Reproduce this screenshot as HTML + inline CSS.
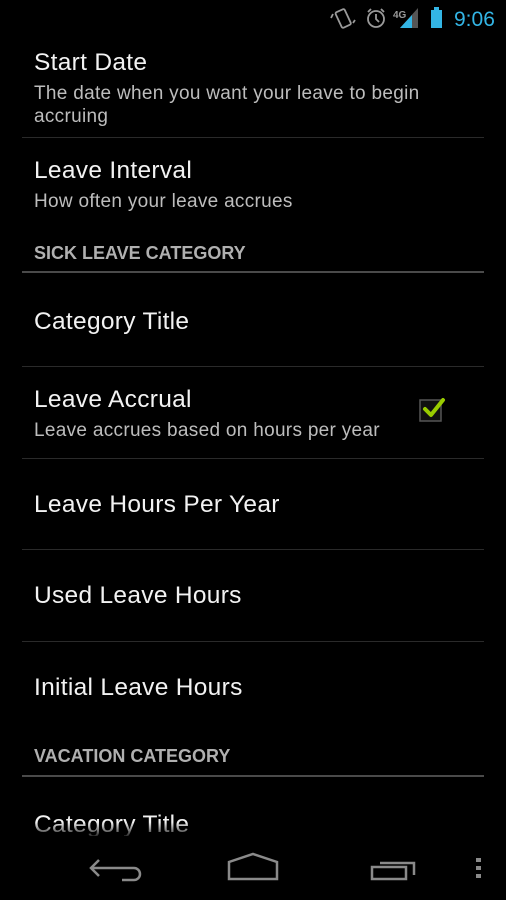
<!DOCTYPE html>
<html><head><meta charset="utf-8"><style>
*{margin:0;padding:0;box-sizing:border-box}
body{width:506px;height:900px;background:#000;overflow:hidden;position:relative;font-family:"Liberation Sans",sans-serif;color:#fff}
.a{position:absolute;white-space:nowrap}
.t{font-size:24.5px;color:#f2f2f2;left:34px;letter-spacing:0.3px}
.s{font-size:19px;color:#bdbdbd;left:34px;letter-spacing:0.3px}
.h{font-size:18px;font-weight:bold;color:#b0b0b0;left:34px}
.d{position:absolute;left:22px;width:462px;height:1px;background:#2a2a2a}
.hd{position:absolute;left:22px;width:462px;height:2px;background:#4a4a4a}
</style></head><body>
<div class="a" style="left:330px;top:4px">
<svg width="176" height="28" viewBox="0 0 176 28">
<g fill="none" stroke="#9a9a9a" stroke-width="1.8">
<rect x="8" y="6" width="10" height="17" rx="1.5" transform="rotate(-25 13 14)"/>
<path d="M3 10l-2 4M23 19l2-3"/>
<circle cx="46" cy="15" r="8"/><path d="M46 10v5l3 3M38 8l3-3M54 8l-3-3"/>
</g>
<text x="63" y="14" font-size="10" font-weight="bold" fill="#9a9a9a" font-family="Liberation Sans">4G</text>
<path d="M70 24L88 4v20z" fill="#555"/><path d="M70 24l12-13v13z" fill="#33b5e5"/>
<rect x="101" y="6" width="11" height="18" fill="#33b5e5"/><rect x="104" y="3" width="5" height="3" fill="#33b5e5"/>
<text x="124" y="22" font-size="21" fill="#33b5e5" font-family="Liberation Sans">9:06</text>
</svg></div>
<div class="a t" style="top:49px">Start Date</div>
<div class="a s" style="top:83px">The date when you want your leave to begin</div>
<div class="a s" style="top:106px">accruing</div>
<div class="d" style="top:137px"></div>
<div class="a t" style="top:157px">Leave Interval</div>
<div class="a s" style="top:191px">How often your leave accrues</div>
<div class="a h" style="top:243px">SICK LEAVE CATEGORY</div>
<div class="hd" style="top:271px"></div>
<div class="a t" style="top:308px">Category Title</div>
<div class="d" style="top:366px"></div>
<div class="a t" style="top:386px">Leave Accrual</div>
<div class="a s" style="top:420px">Leave accrues based on hours per year</div>
<svg class="a" style="left:415px;top:394px" width="34" height="30" viewBox="0 0 34 30">
<rect x="5" y="6" width="21" height="21" fill="#111" stroke="#555" stroke-width="1.5"/>
<path d="M10 15l6 6 12-15" fill="none" stroke="#99cc00" stroke-width="4" stroke-linecap="round" stroke-linejoin="round"/>
</svg>
<div class="d" style="top:458px"></div>
<div class="a t" style="top:491px">Leave Hours Per Year</div>
<div class="d" style="top:549px"></div>
<div class="a t" style="top:582px">Used Leave Hours</div>
<div class="d" style="top:641px"></div>
<div class="a t" style="top:674px">Initial Leave Hours</div>
<div class="a h" style="top:746px">VACATION CATEGORY</div>
<div class="hd" style="top:775px"></div>
<div class="a t" style="top:811px;-webkit-mask-image:linear-gradient(#fff 40%,transparent 100%)">Category Title</div>
<div class="a" style="left:0;top:836px;width:506px;height:64px;background:#000"></div>
<svg class="a" style="left:0;top:840px" width="506" height="60" viewBox="0 0 506 60">
<g fill="none" stroke="#8a8a8a" stroke-width="2.5">
<path d="M122 40h12a6 6 0 0 0 0-12H91M99 20l-8 8 8 8"/>
<path d="M229 39V22l24-8 24 8v17z"/>
<path d="M372 39V27h34v12zM380 23h34v12"/>
</g>
<rect x="476" y="18" width="5" height="4" fill="#8a8a8a"/><rect x="476" y="26" width="5" height="4" fill="#8a8a8a"/><rect x="476" y="34" width="5" height="4" fill="#8a8a8a"/>
</svg>
</body></html>
